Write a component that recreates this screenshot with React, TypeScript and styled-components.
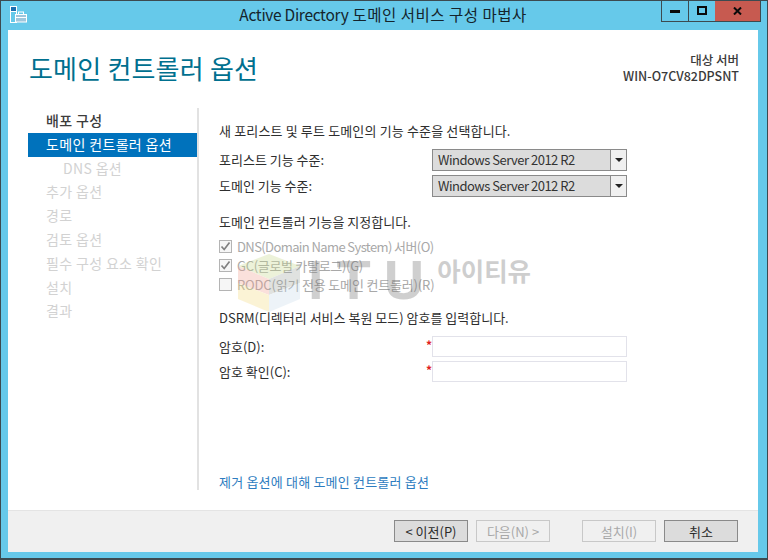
import React from "react";
import styled, { createGlobalStyle } from "styled-components";

const GlobalStyle = createGlobalStyle`
  html, body {
    margin: 0;
    padding: 0;
    background: #66c9ea;
  }
  * {
    box-sizing: border-box;
  }
`;

const Window = styled.div`
  width: 768px;
  height: 560px;
  display: flex;
  flex-direction: column;
  background: #66c9ea;
  border: 1px solid #3c4a50;
  border-bottom: 2px solid #3c4a50;
  font-family: "Noto Sans CJK KR", "Noto Sans", sans-serif;
  font-size: 13px;
  color: #2b2b2b;
  position: relative;
  overflow: hidden;
`;

const TitleBar = styled.div`
  height: 29px;
  flex: none;
  display: flex;
  align-items: center;
  position: relative;
`;

const AppIcon = styled.svg`
  width: 17px;
  height: 17px;
  margin: -2px 0 0 9px;
`;

const TitleText = styled.div`
  position: absolute;
  left: 0;
  width: 764px;
  top: 3px;
  text-align: center;
  font-size: 15.5px;
  line-height: 20px;
  letter-spacing: 0.5px;
  color: #14242c;
`;

const TitleLatin = styled.span`
  letter-spacing: -0.3px;
`;

const WindowButtons = styled.div`
  position: absolute;
  top: -1px;
  right: 6px;
  display: flex;
  height: 22px;
  border: 1px solid #3c4a50;
  border-top: none;
`;

const WindowButton = styled.div<{ $kind: "min" | "max" | "close" }>`
  width: ${(p) => (p.$kind === "close" ? "45px" : p.$kind === "min" ? "27px" : "26px")};
  display: flex;
  align-items: center;
  justify-content: center;
  background: ${(p) => (p.$kind === "close" ? "#c75a50" : "#66c9ea")};
  border-right: ${(p) => (p.$kind === "min" ? "1px solid #3c4a50" : "none")};
`;

const Client = styled.div`
  flex: 1;
  margin: 0 9px 6px 7px;
  background: #ffffff;
  display: flex;
  flex-direction: column;
  min-height: 0;
`;

const Header = styled.div`
  height: 78px;
  flex: none;
  display: flex;
  justify-content: space-between;
  padding: 20px 19px 0 21px;
`;

const PageTitle = styled.h1`
  margin: 0;
  font-size: 26px;
  line-height: 36px;
  font-weight: 400;
  letter-spacing: 0.2px;
  color: #00708f;
`;

const ServerInfo = styled.div`
  text-align: right;
  font-size: 12.5px;
  line-height: 16px;
  font-weight: 500;
  color: #3a3a3a;
  padding-top: 2px;
`;

const Body = styled.div`
  flex: 1;
  display: flex;
  min-height: 0;
  padding-right: 19px;
`;

const Sidebar = styled.nav`
  width: 171px;
  margin-left: 20px;
  height: 382px;
  flex: none;
  border-right: 2px solid #e2e2e2;
  padding-top: 1px;
`;

const NavItem = styled.div<{ $state: "done" | "active" | "off"; $sub?: boolean }>`
  height: 23.8px;
  line-height: 23.8px;
  width: 169px;
  font-size: 14px;
  letter-spacing: 0.35px;
  padding-left: ${(p) => (p.$sub ? "35px" : "18px")};
  font-weight: ${(p) => (p.$state === "done" ? 500 : 400)};
  background: ${(p) => (p.$state === "active" ? "#0072bc" : "transparent")};
  color: ${(p) =>
    p.$state === "active" ? "#ffffff" : p.$state === "done" ? "#3c3c3c" : "#d2d2d2"};
`;

const Content = styled.div`
  flex: 1;
  height: 382px;
  padding: 14px 0 0 20px;
  display: flex;
  flex-direction: column;
  position: relative;
`;

const Para = styled.div<{ $top?: number; $ls?: number }>`
  font-size: 13px;
  line-height: 18px;
  color: #2e2e2e;
  margin-top: ${(p) => p.$top ?? 0}px;
  letter-spacing: ${(p) => p.$ls ?? 0}px;
`;

const FieldRow = styled.div<{ $top?: number }>`
  display: flex;
  align-items: center;
  height: 22px;
  margin-top: ${(p) => p.$top ?? 0}px;
`;

const FieldLabel = styled.div`
  width: 213px;
  flex: none;
  font-size: 13px;
  color: #2e2e2e;
`;

const SelectLabel = styled(FieldLabel)`
  margin-top: -2px;
`;

const Select = styled.div`
  width: 195px;
  height: 22px;
  display: flex;
  background: #dcdcdc;
  border: 1px solid #8a8a8a;
  font-size: 13px;
  color: #333;
`;

const SelectValue = styled.div`
  flex: 1;
  padding-left: 5px;
  line-height: 20px;
  letter-spacing: -0.5px;
`;

const SelectArrow = styled.div`
  width: 16px;
  background: #f0f0f0;
  border-left: 1px solid #8a8a8a;
  display: flex;
  align-items: center;
  justify-content: center;
  &::after {
    content: "";
    border-left: 4px solid transparent;
    border-right: 4px solid transparent;
    border-top: 4px solid #222;
  }
`;

const Checks = styled.div`
  margin-top: 6px;
`;

const CheckRow = styled.div<{ $ls: number }>`
  display: flex;
  align-items: center;
  gap: 5px;
  height: 19px;
  color: #a8a8a8;
  font-size: 13px;
  letter-spacing: ${(p) => p.$ls}px;
`;

const CheckBox = styled.div`
  width: 13px;
  height: 13px;
  flex: none;
  border: 1px solid #b4b4b4;
  background: #f6f6f6;
  display: flex;
  align-items: center;
  justify-content: center;
`;

const Required = styled.span`
  width: 0;
  position: relative;
  left: -6px;
  top: -2px;
  color: #e02020;
  font-size: 12px;
  font-weight: 700;
`;

const TextInput = styled.div`
  width: 195px;
  height: 21px;
  background: #fff;
  border: 1px solid #e2e2ea;
`;

const HelpLink = styled.div`
  position: absolute;
  left: 20px;
  bottom: 0;
  color: #2d7cc0;
  font-size: 13px;
  line-height: 16px;
  letter-spacing: 0.2px;
`;

const Watermark = styled.div`
  position: absolute;
  left: 235px;
  top: 252px;
  display: flex;
  align-items: flex-start;
  opacity: 0.32;
  pointer-events: none;
`;

const WatermarkLatin = styled.div`
  font-family: "Liberation Sans", sans-serif;
  font-weight: 700;
  font-size: 56px;
  line-height: 60px;
  letter-spacing: 13px;
  color: #6e6e6e;
  margin: -3px 0 0 2px;
`;

const WatermarkHangul = styled.div`
  font-size: 25.5px;
  line-height: 30px;
  font-weight: 700;
  color: #6a6a6a;
  margin: 2px 0 0 0;
`;

const Footer = styled.div`
  height: 42px;
  flex: none;
  background: #f0f0f0;
  border-top: 1px solid #e4e4e4;
  display: flex;
  align-items: center;
  padding: 0 19px 1px 386px;
`;

const Button = styled.div<{ $disabled?: boolean; $gap?: number }>`
  width: 74px;
  height: 22px;
  margin-left: ${(p) => p.$gap ?? 0}px;
  display: flex;
  align-items: center;
  justify-content: center;
  font-size: 13px;
  background: ${(p) => (p.$disabled ? "#f0f0f0" : "#dcdcdc")};
  border: 1px solid ${(p) => (p.$disabled ? "#c8c8c8" : "#8a8a8a")};
  color: ${(p) => (p.$disabled ? "#a8a8a8" : "#2b2b2b")};
`;

const navItems: { label: string; state: "done" | "active" | "off"; sub?: boolean }[] = [
  { label: "배포 구성", state: "done" },
  { label: "도메인 컨트롤러 옵션", state: "active" },
  { label: "DNS 옵션", state: "off", sub: true },
  { label: "추가 옵션", state: "off" },
  { label: "경로", state: "off" },
  { label: "검토 옵션", state: "off" },
  { label: "필수 구성 요소 확인", state: "off" },
  { label: "설치", state: "off" },
  { label: "결과", state: "off" },
];

const checks = [
  { label: "DNS(Domain Name System) 서버(O)", checked: true, ls: -0.6 },
  { label: "GC(글로벌 카탈로그)(G)", checked: true, ls: -0.3 },
  { label: "RODC(읽기 전용 도메인 컨트롤러)(R)", checked: false, ls: -0.17 },
];

const Tick = () => (
  <svg width="11" height="11" viewBox="0 0 11 11">
    <path d="M1.5 5.5 L4.2 8.5 L9.5 1.5" fill="none" stroke="#808080" strokeWidth="1.7" />
  </svg>
);

const App: React.FC = () => {
  return (
    <Window>
      <GlobalStyle />
      <TitleBar>
        <AppIcon viewBox="0 0 17 17">
          <rect x="0.5" y="0.5" width="6" height="5" fill="#1c6fb0" stroke="#fff" />
          <rect x="0.5" y="5.5" width="6" height="11" fill="#66c9ea" stroke="#fff" />
          <rect x="5.5" y="8.5" width="11" height="7.5" fill="#9fc6dc" stroke="#fff" />
          <rect x="8.5" y="6" width="5" height="2.5" fill="none" stroke="#fff" />
          <line x1="6" y1="11.5" x2="16" y2="11.5" stroke="#fff" />
        </AppIcon>
        <TitleText>
          <TitleLatin>Active Directory</TitleLatin> 도메인 서비스 구성 마법사
        </TitleText>
        <WindowButtons>
          <WindowButton $kind="min">
            <svg width="10" height="4" viewBox="0 0 10 4">
              <rect width="10" height="3" y="1" fill="#0a0a0a" />
            </svg>
          </WindowButton>
          <WindowButton $kind="max">
            <svg width="10" height="9" viewBox="0 0 10 9">
              <rect x="1" y="1" width="8" height="7" fill="none" stroke="#0a0a0a" strokeWidth="2" />
            </svg>
          </WindowButton>
          <WindowButton $kind="close">
            <svg width="9" height="8" viewBox="0 0 9 8">
              <path d="M1 0.5 L8 7.5 M8 0.5 L1 7.5" stroke="#0a0a0a" strokeWidth="2" />
            </svg>
          </WindowButton>
        </WindowButtons>
      </TitleBar>
      <Client>
        <Header>
          <PageTitle>도메인 컨트롤러 옵션</PageTitle>
          <ServerInfo>
            대상 서버
            <br />
            WIN-O7CV82DPSNT
          </ServerInfo>
        </Header>
        <Body>
          <Sidebar>
            {navItems.map((item) => (
              <NavItem key={item.label} $state={item.state} $sub={item.sub}>
                {item.label}
              </NavItem>
            ))}
          </Sidebar>
          <Content>
            <Para $ls={0.15}>새 포리스트 및 루트 도메인의 기능 수준을 선택합니다.</Para>
            <FieldRow $top={9}>
              <SelectLabel>포리스트 기능 수준:</SelectLabel>
              <Select>
                <SelectValue>Windows Server 2012 R2</SelectValue>
                <SelectArrow />
              </Select>
            </FieldRow>
            <FieldRow $top={4}>
              <SelectLabel>도메인 기능 수준:</SelectLabel>
              <Select>
                <SelectValue>Windows Server 2012 R2</SelectValue>
                <SelectArrow />
              </Select>
            </FieldRow>
            <Para $top={16}>도메인 컨트롤러 기능을 지정합니다.</Para>
            <Checks>
              {checks.map((c) => (
                <CheckRow key={c.label} $ls={c.ls}>
                  <CheckBox>{c.checked && <Tick />}</CheckBox>
                  {c.label}
                </CheckRow>
              ))}
            </Checks>
            <Para $top={15}>DSRM(디렉터리 서비스 복원 모드) 암호를 입력합니다.</Para>
            <FieldRow $top={8}>
              <FieldLabel>암호(D):</FieldLabel>
              <Required>*</Required>
              <TextInput />
            </FieldRow>
            <FieldRow $top={3}>
              <FieldLabel>암호 확인(C):</FieldLabel>
              <Required>*</Required>
              <TextInput />
            </FieldRow>
            <HelpLink>제거 옵션에 대해 도메인 컨트롤러 옵션</HelpLink>
          </Content>
        </Body>
        <Footer>
          <Button>&lt; 이전(P)</Button>
          <Button $disabled $gap={8}>다음(N) &gt;</Button>
          <Button $disabled $gap={32}>설치(I)</Button>
          <Button $gap={8}>취소</Button>
        </Footer>
      </Client>
      <Watermark>
        <svg width="70" height="60" viewBox="0 0 70 60">
          <path d="M33 1 L64 13 L33 26 L2 13 Z" fill="#c6d88a" />
          <path d="M2 13 L33 26 L33 42 L2 30 Z" fill="#f0a090" />
          <path d="M2 30 L33 42 L33 59 L2 46 Z" fill="#f5dc80" />
          <path d="M64 13 L33 26 L33 42 L64 30 Z" fill="#a0a8a0" />
          <path d="M64 30 L33 42 L33 59 L64 46 Z" fill="#c8dcec" />
        </svg>
        <WatermarkLatin>ITU</WatermarkLatin>
        <WatermarkHangul>아이티유</WatermarkHangul>
      </Watermark>
    </Window>
  );
};

export default App;
